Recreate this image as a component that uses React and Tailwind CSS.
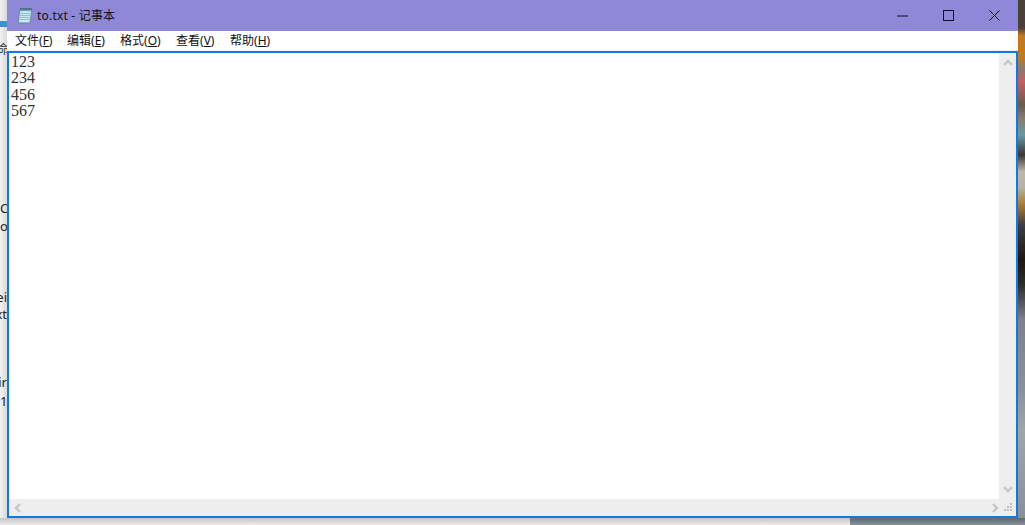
import React from 'react';

const cjk = "font-['Noto_Sans','Noto_Sans_CJK_SC',sans-serif]";

const menus = [
  ['文件', 'F', 'w-[52px]'],
  ['编辑', 'E', 'w-[53px]'],
  ['格式', 'O', 'w-[56px]'],
  ['查看', 'V', 'w-[54px]'],
  ['帮助', 'H', 'w-[50px]'],
];

const NotepadIcon = () => (
  <svg width="16" height="17" viewBox="0 0 16 17">
    <path d="M3 2 H15 L13 16 H1 Z" fill="#a9d6e4" stroke="#6f7f8c" strokeWidth="0.8" />
    <path d="M3.6 4.5 H13.8 L12.2 15 H2.2 Z" fill="#c9e8ee" />
    <path d="M3 1 H15 L14.7 3.4 H2.7 Z" fill="#4f7488" />
    <path d="M3.4 6.5 H13.4 M3.1 8.5 H13.1 M2.8 10.5 H12.8 M2.5 12.5 H12.5" stroke="#86b4c6" strokeWidth="0.8" />
  </svg>
);

const Arrow = ({ d, w = 10, h = 10 }) => (
  <svg width={w} height={h} viewBox="0 0 10 10" fill="none">
    <path d={d} stroke="#c6c6c6" strokeWidth="2.4" />
  </svg>
);

const Fragment = ({ text, className }) => (
  <div className={`flex justify-end h-[16px] leading-[16px] text-[13px] text-[#222] whitespace-nowrap ${className}`}>
    {text}
  </div>
);

export default function App() {
  return (
    <div className={`w-[1025px] h-[525px] flex flex-col overflow-hidden bg-white ${cjk}`}>
      <div className="flex h-[518px]">
        {/* whatever sits behind the window on the left */}
        <div className="w-[7px] flex flex-col overflow-hidden bg-gradient-to-r from-[#f2f2f2] to-[#d9d9d9]">
          <div className="h-[6px] mt-[21px] bg-[#3d8fd6]" />
          <div className="mt-[15px] flex justify-center h-[16px] leading-[16px] text-[12px] text-[#333]">命</div>
          <Fragment text="C" className="mt-[142px] justify-start" />
          <Fragment text="o" className="mt-[2px] justify-start" />
          <Fragment text="ei" className="mt-[55px]" />
          <Fragment text="xt" className="mt-[1px]" />
          <Fragment text="ir" className="mt-[52px]" />
          <Fragment text="1" className="mt-[3px] justify-start" />
        </div>

        <div className="flex-1 flex flex-col bg-[#f0f0f0]">
          <div className="h-[31px] bg-[#8f88d8] flex items-center shrink-0">
            <div className="ml-[10px] w-[20px]"><NotepadIcon /></div>
            <span className="text-[12px] text-[#111] tracking-[0.2px]">to.txt - 记事本</span>
            <div className="ml-auto flex items-center">
              <svg width="11" height="2" viewBox="0 0 11 2" className="mr-[35px]">
                <path d="M0 1 H11" stroke="#111" strokeWidth="1" />
              </svg>
              <svg width="11" height="11" viewBox="0 0 11 11" className="mr-[35px]">
                <rect x="0.5" y="0.5" width="10" height="10" fill="none" stroke="#111" strokeWidth="1" />
              </svg>
              <svg width="11" height="11" viewBox="0 0 11 11" className="mr-[18px]">
                <path d="M0.5 0.5 L10.5 10.5 M10.5 0.5 L0.5 10.5" stroke="#111" strokeWidth="1" />
              </svg>
            </div>
          </div>

          <div className="h-[19px] bg-white flex items-center pl-[8px] pt-[1px] text-[12px] text-[#111] shrink-0">
            {menus.map(([label, key, width]) => (
              <span key={key} className={`${width} whitespace-nowrap`}>
                {label}(<span className="underline">{key}</span>)
              </span>
            ))}
          </div>

          <div className="h-[1px] shrink-0" />

          <div className="flex-1 min-h-0 flex flex-col border-2 border-[#0f7ae5] bg-white">
            <div className="flex-1 min-h-0 flex">
              <div className="flex-1 pl-[2px] pt-[1px] font-['Liberation_Serif',serif] text-[16px] leading-[16.4px] text-[#333]">
                <div>123</div>
                <div>234</div>
                <div>456</div>
                <div>567</div>
              </div>
              <div className="w-[17px] flex flex-col items-center justify-between py-[5px] bg-[#eeeeee]">
                <Arrow d="M1 7 L5 3 L9 7" />
                <Arrow d="M1 3 L5 7 L9 3" />
              </div>
            </div>
            <div className="h-[17px] bg-[#eeeeee] flex items-center justify-between pl-[4px] pr-[3px] shrink-0">
              <Arrow d="M7 1 L3 5 L7 9" />
              <div className="flex items-center gap-[4px]">
                <Arrow d="M3 1 L7 5 L3 9" />
                <svg width="9" height="9" viewBox="0 0 9 9" fill="#c0c0c0">
                  <rect x="6" y="0" width="2" height="2" />
                  <rect x="3" y="3" width="2" height="2" />
                  <rect x="6" y="3" width="2" height="2" />
                  <rect x="0" y="6" width="2" height="2" />
                  <rect x="3" y="6" width="2" height="2" />
                  <rect x="6" y="6" width="2" height="2" />
                </svg>
              </div>
            </div>
          </div>
        </div>

        {/* blurred wallpaper on the right */}
        <div className="w-[7px] bg-[linear-gradient(to_bottom,#4b4038_0px,#4b4038_28px,#c27a20_36px,#c27a20_58px,#8a7a70_68px,#c26060_82px,#6a5c4c_105px,#8a7a70_118px,#6a98a0_135px,#3c3834_155px,#c0b8a8_172px,#b8b0a0_188px,#a87a30_205px,#403c40_225px,#201810_260px,#302c28_285px,#80808a_320px,#8a9098_390px,#a0a6a6_430px,#8a9098_518px)]" />
      </div>

      <div className="flex flex-1">
        <div className="w-[850px] bg-gradient-to-b from-[#c4c4c4] to-[#ececec]" />
        <div className="flex-1 bg-gradient-to-b from-[#5f6a72] to-[#83929a]" />
      </div>
    </div>
  );
}
